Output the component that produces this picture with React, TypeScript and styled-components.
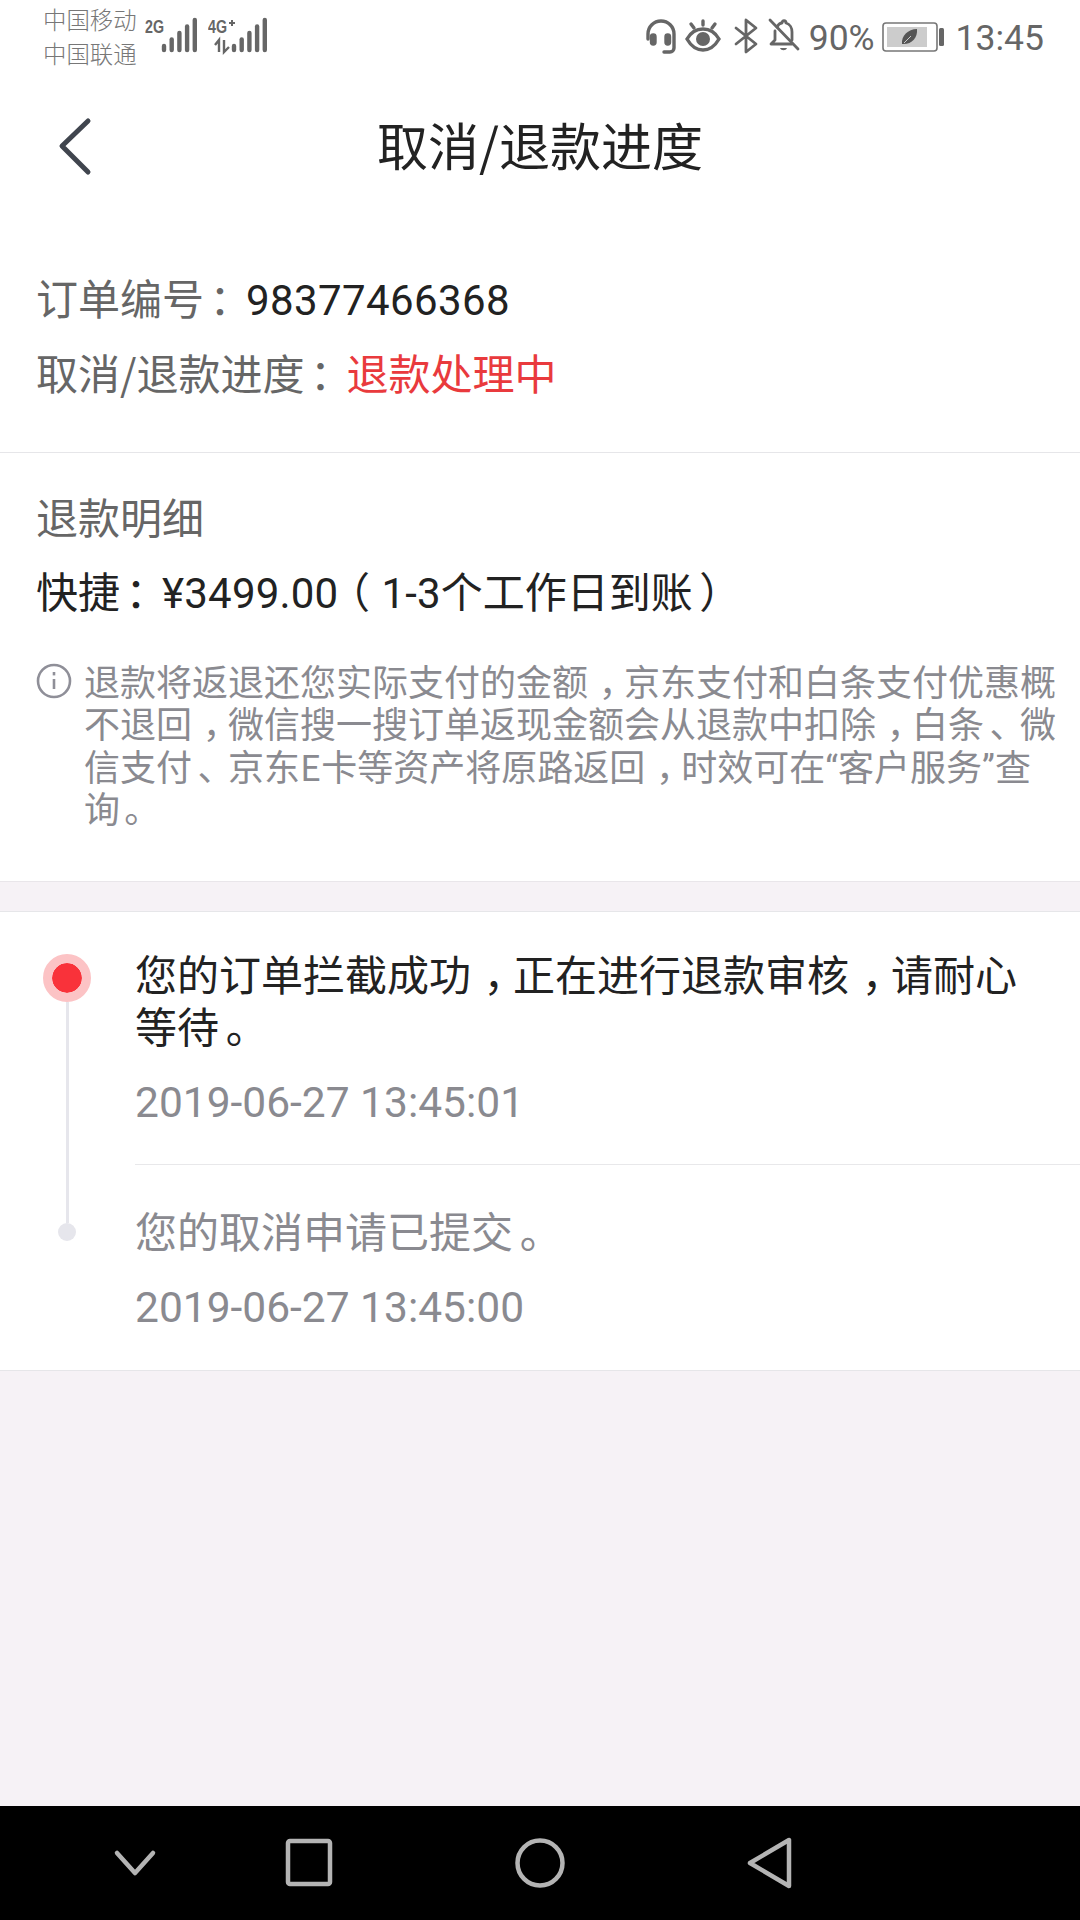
import React from "react";
import styled, { createGlobalStyle } from "styled-components";

const GlobalStyle = createGlobalStyle`
  html, body {
    margin: 0;
    padding: 0;
    background: #f6f2f6;
  }
  body {
    font-family: "Noto Sans CJK SC", "Noto Sans", sans-serif;
  }
`;

const Screen = styled.div`
  width: 1080px;
  height: 1920px;
  display: flex;
  flex-direction: column;
  background: #f6f2f6;
  overflow: hidden;
`;

const StatusBar = styled.div`
  height: 72px;
  flex: none;
  display: flex;
  justify-content: space-between;
  background: #fff;
  color: #666;
  padding: 0 36px 0 43px;
  box-sizing: border-box;
`;

const StatusLeft = styled.div`
  display: flex;
  align-items: flex-start;
`;

const Carriers = styled.div`
  font-size: 23.4px;
  line-height: 34px;
  color: #777;
  padding-top: 2px;
  font-weight: 300;
`;

const StatusRight = styled.div`
  display: flex;
  align-items: flex-start;
  padding-top: 18px;
`;

const StatusText = styled.span<{ $left: number }>`
  font-family: Roboto, sans-serif;
  font-size: 35.5px;
  line-height: 40px;
  color: #666;
  margin-left: ${(p) => p.$left}px;
`;

const Glyph = styled.svg<{ $left?: number; $top?: number }>`
  display: block;
  flex: none;
  margin-left: ${(p) => p.$left ?? 0}px;
  margin-top: ${(p) => p.$top ?? 0}px;
`;

const Header = styled.div`
  height: 150px;
  flex: none;
  display: flex;
  align-items: center;
  justify-content: center;
  background: #fff;
  padding-bottom: 6px;
  box-sizing: border-box;
  position: relative;
`;

const BackButton = styled.div`
  position: absolute;
  left: 58px;
  top: 45px;
`;

const Title = styled.h1`
  margin: 0;
  font-size: 51px;
  font-weight: 400;
  line-height: 60px;
  color: #222;
`;

const OrderSection = styled.section`
  background: #fff;
  padding: 45px 36px 0;
  height: 231px;
  box-sizing: border-box;
  border-bottom: 1px solid #e6e6e9;
  flex: none;
`;

const InfoLine = styled.div`
  font-size: 42px;
  line-height: 60px;
  height: 75px;
  color: #666;
  white-space: nowrap;
`;

const OrderNo = styled.span`
  font-family: Roboto, sans-serif;
  letter-spacing: 0.4px;
  color: #222;
`;

const Status = styled.span`
  color: #e93a3d;
`;

// the reference's font sets punctuation further into its em box than Noto does
const Punct = styled.span<{ $shift: number }>`
  margin-left: ${(p) => p.$shift}em;
  margin-right: ${(p) => -p.$shift}em;
`;

const RefundSection = styled.section`
  background: #fff;
  padding: 33px 0 0 36px;
  height: 429px;
  box-sizing: border-box;
  border-bottom: 1px solid #e9e6ea;
  flex: none;
`;

const RefundHeading = styled.div`
  font-size: 42px;
  line-height: 60px;
  height: 74px;
  color: #666;
`;

const RefundLine = styled.div`
  font-size: 42px;
  line-height: 60px;
  height: 75px;
  color: #222;
  white-space: nowrap;
`;

const Amount = styled.span<{ $lead?: number }>`
  font-family: Roboto, sans-serif;
  letter-spacing: 0.2px;
  margin-left: ${(p) => p.$lead ?? 0}px;
`;

const Note = styled.div`
  display: flex;
  margin-top: 24px;
`;

const NoteIcon = styled.svg`
  flex: none;
  width: 36px;
  height: 36px;
  margin-right: 12px;
  margin-top: 4px;
`;

const NoteText = styled.p`
  margin: 0;
  width: 976px;
  font-size: 36px;
  line-height: 42.4px;
  color: #8a8a90;
`;

const Quote = styled.span`
  font-family: Roboto, sans-serif;
  line-height: 0;
`;

const TimelineSection = styled.section`
  margin-top: 29px;
  background: #fff;
  height: 460px;
  box-sizing: border-box;
  border-top: 1px solid #e6e6e9;
  border-bottom: 1px solid #e6e6e9;
  display: flex;
  flex: none;
`;

const Rail = styled.div`
  flex: none;
  width: 135px;
  padding: 42px 0 0 43px;
  box-sizing: border-box;
`;

const RailTrack = styled.div`
  width: 48px;
  display: flex;
  flex-direction: column;
  align-items: center;
`;

const ActiveDot = styled.div`
  width: 48px;
  height: 48px;
  box-sizing: border-box;
  border-radius: 50%;
  background: #f9323a;
  border: 9px solid #fcc3c5;
  background-clip: padding-box;
`;

const RailLine = styled.div`
  width: 3px;
  height: 221px;
  background: #e6e6ec;
`;

const PastDot = styled.div`
  width: 18px;
  height: 18px;
  border-radius: 50%;
  background: #e6e6ec;
`;

const Entries = styled.div`
  flex: 1;
  min-width: 0;
`;

const Entry = styled.div<{ $active?: boolean }>`
  box-sizing: border-box;
  height: ${(p) => (p.$active ? 253 : 205)}px;
  padding: ${(p) => (p.$active ? 35 : 39)}px 50px 0 0;
  border-bottom: ${(p) => (p.$active ? "1px solid #e8e8ea" : "none")};
  color: ${(p) => (p.$active ? "#222" : "#8a8a90")};
`;

const EntryTitle = styled.div`
  font-size: 42px;
  line-height: 52px;
`;

const EntryTime = styled.div`
  font-family: Roboto, sans-serif;
  font-size: 42.5px;
  line-height: 50px;
  margin-top: 27px;
  color: #8a8a90;
`;

const Filler = styled.div`
  flex: 1;
`;

const NavBar = styled.nav`
  height: 114px;
  flex: none;
  background: #000;
  position: relative;
`;

const NavIcon = styled.svg<{ $left: number }>`
  display: block;
  position: absolute;
  left: ${(p) => p.$left}px;
  top: 29px;
`;

const Signal = ({ label, arrows }: { label: string; arrows?: boolean }) => (
  <Glyph $left={arrows ? 9 : 8} $top={16} width={arrows ? 60 : 54} height="40" viewBox={arrows ? "0 0 60 40" : "0 0 54 40"}>
    <text x="0" y="17" fontFamily="'Liberation Sans', sans-serif" fontWeight="700" fontSize="19" textLength={19} lengthAdjust="spacingAndGlyphs" fill="#666">
      {label}
    </text>
    {arrows && <path d="M21 7h6M24 4v6" stroke="#666" strokeWidth="2" fill="none" />}
    {arrows && <path d="M7 29l4-5v12M16 24v12l5-5" stroke="#666" strokeWidth="2.4" fill="none" />}
    {[0, 1, 2, 3, 4].map((i) => {
      const x = (arrows ? 26 : 19) + i * 7.7;
      const top = 30 - i * 6.5;
      return <line key={i} x1={x} x2={x} y1={top} y2="34" stroke="#666" strokeWidth="4.4" strokeLinecap="round" />;
    })}
  </Glyph>
);

const App = () => (
  <Screen>
    <GlobalStyle />
    <StatusBar>
      <StatusLeft>
        <Carriers>
          中国移动
          <br />
          中国联通
        </Carriers>
        <Signal label="2G" />
        <Signal label="4G" arrows />
      </StatusLeft>
      <StatusRight>
        <Glyph width="32" height="36" viewBox="0 0 32 36" fill="none" stroke="#666" strokeWidth="3.4" strokeLinecap="round">
          <path d="M3 21v-5a13 13 0 0 1 26 0v14a4 4 0 0 1-4 4h-6" />
          <rect x="6.5" y="17" width="3.5" height="9" rx="1.7" fill="#666" />
          <rect x="21" y="17" width="3.5" height="9" rx="1.7" fill="#666" />
        </Glyph>
        <Glyph $left={7} width="38" height="34" viewBox="0 0 38 34" fill="none" stroke="#666" strokeWidth="3.4" strokeLinecap="round">
          <path d="M3 21c4-7 10-10 16-10s12 3 16 10c-4 7-10 11-16 11S7 28 3 21z" />
          <circle cx="19" cy="21" r="7" fill="#666" stroke="none" />
          <path d="M19 3v4M7 6l3 4M31 6l-3 4" />
        </Glyph>
        <Glyph $left={12} width="24" height="36" viewBox="0 0 24 36" fill="none" stroke="#666" strokeWidth="2.8" strokeLinecap="round" strokeLinejoin="round">
          <path d="M2 10l20 16-10 8V2l10 8L2 26" />
        </Glyph>
        <Glyph $left={10} width="32" height="34" viewBox="0 0 32 34" fill="none" stroke="#666" strokeWidth="2.8" strokeLinecap="round" strokeLinejoin="round">
          <path d="M9 9c1-2 3-4 5-4 0-3 4-3 4 0 4 1 6 5 6 9v8M7 13v9l-4 4h21" />
          <path d="M2 2l28 29" />
          <path d="M12 30c1 3 6 3 7 0z" fill="#666" stroke="none" />
        </Glyph>
        <StatusText $left={9}>90%</StatusText>
        <Glyph $left={7} $top={4} width="62" height="30" viewBox="0 0 62 30">
          <rect x="1" y="1" width="54" height="28" rx="3" fill="#fff" stroke="#777" strokeWidth="1.6" />
          <rect x="5" y="5" width="40" height="20" fill="#ccc" />
          <path d="M20 22c-1-8 6-15 15-15 1 9-6 16-15 15z" fill="#555" />
          <path d="M22 21l7-7" stroke="#ccc" strokeWidth="1" />
          <rect x="57" y="6" width="5" height="18" rx="1.5" fill="#666" />
        </Glyph>
        <StatusText $left={12}>13:45</StatusText>
      </StatusRight>
    </StatusBar>
    <Header>
      <BackButton>
        <svg width="34" height="60" viewBox="0 0 34 60" fill="none" stroke="#40454e" strokeWidth="5" strokeLinecap="round" strokeLinejoin="round">
          <path d="M30 4L4 29l26 26" />
        </svg>
      </BackButton>
      <Title>取消/退款进度</Title>
    </Header>
    <OrderSection>
      <InfoLine>
        订单编号<Punct $shift={0.13}>：</Punct>
        <OrderNo>98377466368</OrderNo>
      </InfoLine>
      <InfoLine>
        取消/退款进度<Punct $shift={0.13}>：</Punct>
        <Status>退款处理中</Status>
      </InfoLine>
    </OrderSection>
    <RefundSection>
      <RefundHeading>退款明细</RefundHeading>
      <RefundLine>
        快捷<Punct $shift={0.13}>：</Punct>
        <Amount>¥3499.00</Amount>
        <Punct $shift={-0.25}>（</Punct>
        <Amount $lead={1}>1-3</Amount>个工作日到账<Punct $shift={0.15}>）</Punct>
      </RefundLine>
      <Note>
        <NoteIcon viewBox="0 0 36 36" fill="none" stroke="#8f8f98" strokeWidth="2.6">
          <circle cx="18" cy="18" r="16" />
          <path d="M18 16v10" />
          <path d="M18 9v3.4" />
        </NoteIcon>
        <NoteText>
          退款将返退还您实际支付的金额<Punct $shift={0.3}>，</Punct>京东支付和白条支付优惠概不退回<Punct $shift={0.3}>，</Punct>微信搜一搜订单返现金额会从退款中扣除<Punct $shift={0.3}>，</Punct>白条<Punct $shift={0.15}>、</Punct>微信支付<Punct $shift={0.15}>、</Punct>京东E卡等资产将原路返回<Punct $shift={0.3}>，</Punct>时效可在<Quote>“</Quote>客户服务<Quote>”</Quote>查询<Punct $shift={0.12}>。</Punct>
        </NoteText>
      </Note>
    </RefundSection>
    <TimelineSection>
      <Rail>
        <RailTrack>
          <ActiveDot />
          <RailLine />
          <PastDot />
        </RailTrack>
      </Rail>
      <Entries>
        <Entry $active>
          <EntryTitle>
            您的订单拦截成功<Punct $shift={0.3}>，</Punct>正在进行退款审核<Punct $shift={0.3}>，</Punct>请耐心等待<Punct $shift={0.16}>。</Punct>
          </EntryTitle>
          <EntryTime>2019-06-27 13:45:01</EntryTime>
        </Entry>
        <Entry>
          <EntryTitle>
            您的取消申请已提交<Punct $shift={0.16}>。</Punct>
          </EntryTitle>
          <EntryTime>2019-06-27 13:45:00</EntryTime>
        </Entry>
      </Entries>
    </TimelineSection>
    <Filler />
    <NavBar>
      <NavIcon $left={112} width="46" height="56" viewBox="0 0 46 56" fill="none" stroke="#b4b4b4" strokeWidth="4.5" strokeLinecap="round" strokeLinejoin="round">
        <path d="M5 18l18 20 18-20" />
      </NavIcon>
      <NavIcon $left={285} width="48" height="56" viewBox="0 0 48 56" fill="none" stroke="#b4b4b4" strokeWidth="4.5" strokeLinejoin="round">
        <rect x="3" y="6" width="42" height="43" rx="2" />
      </NavIcon>
      <NavIcon $left={514} width="52" height="56" viewBox="0 0 52 56" fill="none" stroke="#b4b4b4" strokeWidth="4.5">
        <circle cx="26" cy="28" r="22.5" />
      </NavIcon>
      <NavIcon $left={746} width="48" height="56" viewBox="0 0 48 56" fill="none" stroke="#b4b4b4" strokeWidth="4.5" strokeLinejoin="round">
        <path d="M43 5v46L4 28z" />
      </NavIcon>
    </NavBar>
  </Screen>
);

export default App;
